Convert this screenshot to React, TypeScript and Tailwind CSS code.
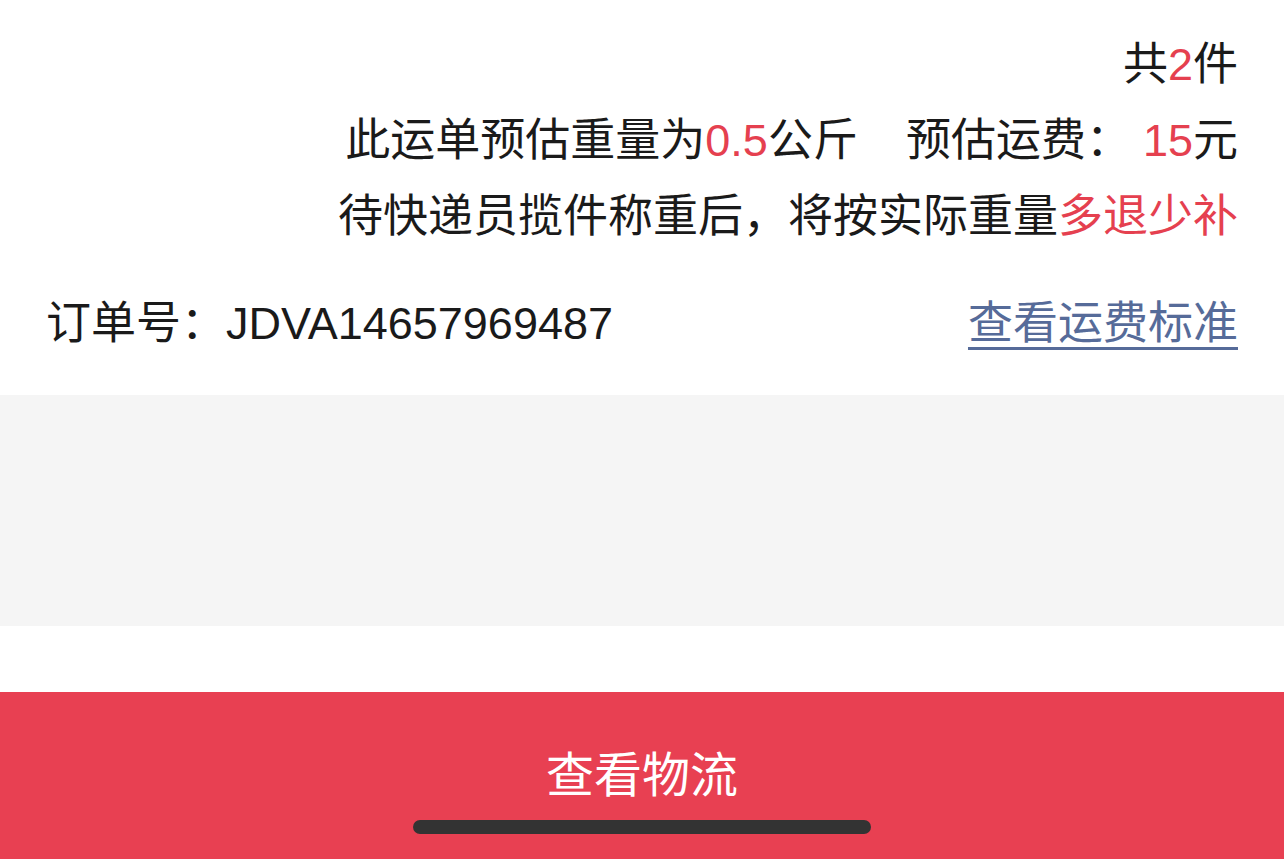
import React from 'react';

const font = { fontFamily: '"Liberation Sans", "Noto Sans CJK SC", sans-serif' };

export default function App() {
    return (
        <div className="w-[1284px] h-[859px] bg-white flex flex-col overflow-hidden relative" style={font}>
            <div className="px-[46px] pt-[27px] pb-[33px] text-[45px] text-[#1a1a1a]">
                <div className="flex flex-col items-end leading-[76px]">
                    <div>
                        共<span className="text-[#e5404f]">2</span>件
                    </div>
                    <div className="flex">
                        <span>
                            此运单预估重量为<span className="text-[#e5404f]">0.5</span>公斤
                        </span>
                        <span className="ml-[48px]">预估运费：</span>
                        <span className="ml-[12px]">
                            <span className="text-[#e5404f]">15</span>元
                        </span>
                    </div>
                    <div>
                        待快递员揽件称重后，将按实际重量<span className="text-[#e5404f]">多退少补</span>
                    </div>
                </div>
                <div className="flex items-center justify-between mt-[31px] leading-[76px]">
                    <span>订单号：JDVA14657969487</span>
                    <span className="text-[#566b99] underline decoration-[3px] underline-offset-[8px]">查看运费标准</span>
                </div>
            </div>
            <div className="h-[231px] bg-[#f5f5f5]" />
            <div className="h-[66px] bg-white" />
            <div className="flex-1 bg-[#e84052] flex items-center justify-center">
                <span className="text-white text-[48px] leading-none">查看物流</span>
            </div>
            <div className="absolute left-[413px] top-[820px] w-[458px] h-[14px] rounded-full bg-[#333333]" />
        </div>
    );
}
